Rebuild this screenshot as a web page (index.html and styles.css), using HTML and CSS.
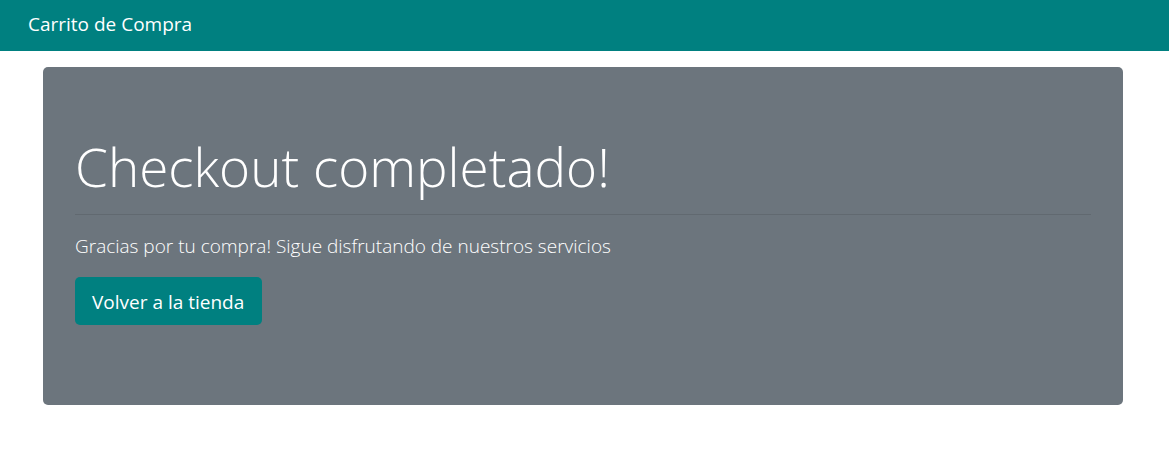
FILE: index.html
```html
<!DOCTYPE html>
<html lang="es">
<head>
<meta charset="utf-8">
<meta name="viewport" content="width=device-width, initial-scale=1">
<title>Carrito de Compra</title>
<link rel="stylesheet" href="styles.css">
</head>
<body>
<nav class="navbar"><a class="brand" href="#">Carrito de Compra</a></nav>
<main class="container">
<section class="jumbotron">
<h1 class="title">Checkout completado!</h1>
<hr class="divider">
<p class="lead">Gracias por tu compra! Sigue disfrutando de nuestros servicios</p>
<button class="btn" type="button">Volver a la tienda</button>
</section>
</main>
</body>
</html>
```

FILE: styles.css
```css
* { box-sizing: border-box; }
body {
  margin: 0;
  background: #fff;
  color: #fff;
  font-family: "Segoe UI", "Open Sans", "Noto Sans", sans-serif;
}
.navbar {
  padding: 9px 28px 12px;
  background: #008080;
}
.brand {
  display: inline-block;
  color: #fff;
  font-size: 19px;
  line-height: 30px;
  text-decoration: none;
  vertical-align: top;
}
.container {
  padding: 16px 46px 32px 43px;
}
.jumbotron {
  padding: 67px 32px 80px;
  border-radius: 5px;
  background: #6c757d;
}
.title {
  margin: 0;
  font-size: 53px;
  font-weight: 300;
  line-height: 66px;
}
.divider {
  margin: 14px 0 16px;
  border: 0;
  border-top: 1px solid rgba(0, 0, 0, 0.1);
}
.lead {
  margin: 0 0 16px;
  font-size: 19px;
  font-weight: 300;
  line-height: 30px;
}
.btn {
  display: block;
  padding: 10px 18px 8px 17px;
  border: 0;
  border-radius: 5px;
  background: #008080;
  color: #fff;
  font-family: inherit;
  font-size: 19px;
  line-height: 30px;
  cursor: pointer;
}
```
